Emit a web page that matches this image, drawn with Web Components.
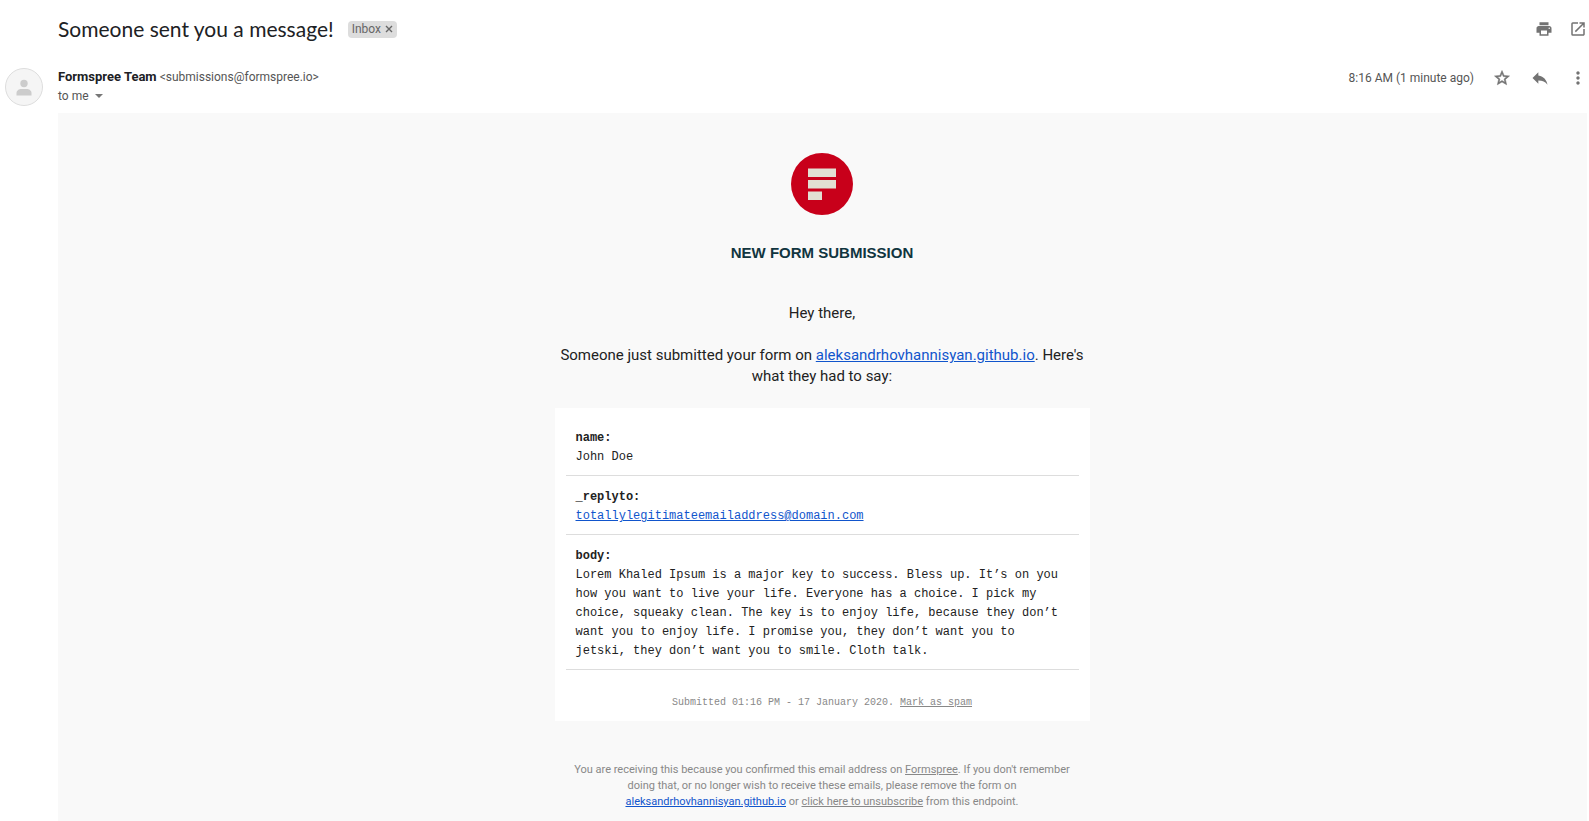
<!DOCTYPE html>
<html lang="en">
<head>
<meta charset="utf-8">
<title>Someone sent you a message!</title>
<style>
  body { margin: 0; background: #fff; color: #222; font-family: Roboto, sans-serif; }
</style>
</head>
<body>
<mail-view></mail-view>
<script>
const define = (name, html) => {
  const template = document.createElement('template');
  template.innerHTML = html;
  customElements.define(name, class extends HTMLElement {
    constructor() {
      super();
      this.attachShadow({ mode: 'open' }).append(template.content.cloneNode(true));
    }
  });
};

const icons = {
  print: [18, 'M19 8H5c-1.66 0-3 1.34-3 3v6h4v4h12v-4h4v-6c0-1.66-1.34-3-3-3zm-3 11H8v-5h8v5zm3-7c-.55 0-1-.45-1-1s.45-1 1-1 1 .45 1 1-.45 1-1 1zm-1-9H6v4h12V3z'],
  open: [18, 'M19 19H5V5h7V3H5a2 2 0 0 0-2 2v14a2 2 0 0 0 2 2h14c1.100 0 2-.9 2-2v-7h-2v7zM14 3v2h3.590l-9.830 9.830 1.410 1.410L19 6.410V10h2V3h-7z'],
  star: [18, 'M22 9.240l-7.190-.62L12 2 9.190 8.630 2 9.240l5.460 4.730L5.820 21 12 17.270 18.180 21l-1.630-7.030L22 9.240zM12 15.400l-3.760 2.270 1-4.280-3.320-2.880 4.380-.38L12 6.100l1.710 4.040 4.380.38-3.320 2.880 1 4.280L12 15.400z'],
  reply: [20, 'M10 9V5l-7 7 7 7v-4.100c5 0 8.500 1.600 11 5.100-1-5-4-10-11-11z'],
  more: [20, 'M12 8c1.100 0 2-.9 2-2s-.9-2-2-2-2 .9-2 2 .9 2 2 2zm0 2c-1.100 0-2 .9-2 2s.9 2 2 2 2-.9 2-2-.9-2-2-2zm0 6c-1.100 0-2 .9-2 2s.9 2 2 2 2-.9 2-2-.9-2-2-2z']
};

customElements.define('icon-button', class extends HTMLElement {
  connectedCallback() {
    if (this.shadowRoot) return;
    const [size, path] = icons[this.getAttribute('icon')];
    const edge = this.getAttribute('icon') === 'star' ? ' stroke="#737373" stroke-width="0.700"' : '';
    this.attachShadow({ mode: 'open' }).innerHTML = `
      <style>
        :host { display: block; flex: none; }
        button { display: grid; place-items: center; width: 20px; height: 20px; padding: 0; border: 0; background: none; cursor: pointer; }
        svg { display: block; fill: #737373; }
      </style>
      <button type="button" aria-label="${this.getAttribute('label')}"><svg width="${size}" height="${size}" viewBox="0 0 24 24"><path d="${path}"${edge}/></svg></button>`;
  }
});

define('label-chip', `
  <style>
    :host { display: flex; align-items: center; gap: 4px; height: 17px; padding: 0 4px; border-radius: 4px; background: #ddd; color: #666; font-size: 12px; line-height: 16px; }
    button { display: block; padding: 0; border: 0; background: none; cursor: pointer; }
    svg { display: block; }
  </style>
  <slot></slot>
  <button type="button" aria-label="Remove label"><svg width="8" height="8" viewBox="0 0 8 8"><path d="M1 1l6 6M7 1L1 7" stroke="#666" stroke-width="1.400"/></svg></button>`);

define('subject-bar', `
  <style>
    :host { display: flex; align-items: center; height: 58px; padding: 0 1px 0 58px; }
    h1 { margin: 0; font: 400 21px/28px Lato, sans-serif; color: #202124; }
    label-chip { margin-left: 14px; }
    .tools { display: flex; gap: 14px; margin-left: auto; }
  </style>
  <h1><slot></slot></h1>
  <label-chip>Inbox</label-chip>
  <div class="tools">
    <icon-button icon="print" label="Print all"></icon-button>
    <icon-button icon="open" label="In new window"></icon-button>
  </div>`);

define('sender-bar', `
  <style>
    :host { display: flex; align-items: flex-start; height: 45px; padding: 10px 1px 0 5px; color: #555; font-size: 12px; line-height: 18px; }
    .avatar { flex: none; width: 38px; height: 38px; margin-right: 15px; }
    .name { color: #202124; font-size: 13px; font-weight: 700; }
    .who button { display: flex; align-items: center; gap: 6px; padding: 0; border: 0; background: none; color: inherit; font: inherit; line-height: 20px; cursor: pointer; }
    .tools { display: flex; align-items: center; gap: 18px; margin-left: auto; }
  </style>
  <svg class="avatar" viewBox="0 0 38 38" role="img" aria-label="Sender">
    <circle cx="19" cy="19" r="18.500" fill="#f5f5f5" stroke="#ddd"/>
    <circle cx="19" cy="15.500" r="3.700" fill="#ccc"/>
    <path d="M11.500 27.500v-2.500c0-2.500 2.500-4 5-4h5c2.500 0 5 1.500 5 4v2.500z" fill="#ccc"/>
  </svg>
  <div class="who">
    <div><span class="name">Formspree Team</span> <span>&lt;submissions@formspree.io&gt;</span></div>
    <button type="button">to me <svg width="8" height="4" viewBox="0 0 8 4"><path d="M0 0h8L4 4z" fill="#777"/></svg></button>
  </div>
  <div class="tools">
    <time>8:16 AM (1 minute ago)</time>
    <icon-button icon="star" label="Star"></icon-button>
    <icon-button icon="reply" label="Reply"></icon-button>
    <icon-button icon="more" label="More"></icon-button>
  </div>`);

define('form-field', `
  <style>
    :host { display: block; padding: 12px 10px 8px; border-bottom: 1px solid #ddd; }
    dl, dd { margin: 0; }
    dt { font-weight: 700; }
    ::slotted(a) { color: #15c; }
  </style>
  <dl><dt><slot name="key"></slot></dt><dd><slot></slot></dd></dl>`);

define('submission-card', `
  <style>
    :host { display: block; padding: 9px 11px 8px; background: #fff; font: 12px/19px "Liberation Mono", monospace; color: #222; }
    p { margin: 23px 0 0; text-align: center; font-size: 10px; line-height: 20px; color: #888; }
    p a { color: inherit; }
  </style>
  <form-field><span slot="key">name:</span>John Doe</form-field>
  <form-field><span slot="key">_replyto:</span><a href="mailto:totallylegitimateemailaddress@domain.com">totallylegitimateemailaddress@domain.com</a></form-field>
  <form-field><span slot="key">body:</span>Lorem Khaled Ipsum is a major key to success. Bless up. It’s on you how you want to live your life. Everyone has a choice. I pick my choice, squeaky clean. The key is to enjoy life, because they don’t want you to enjoy life. I promise you, they don’t want you to jetski, they don’t want you to smile. Cloth talk.</form-field>
  <p>Submitted 01:16 PM - 17 January 2020. <a href="#spam">Mark as spam</a></p>`);

define('mail-body', `
  <style>
    :host { display: flex; flex-direction: column; align-items: center; margin: 0 2px 0 58px; padding: 40px 1px 10px 0; background: #f9f9f9; text-align: center; }
    .logo { display: block; width: 62px; height: 62px; }
    h2 { margin: 28px 0 0; color: #11353f; font: 700 15px/20px "Liberation Sans", sans-serif; }
    .column { width: 100%; max-width: 535px; }
    .intro { margin: 40px 0 21px; font-size: 15px; line-height: 21px; }
    .intro p { margin: 0 0 21px; }
    a { color: #15c; }
    submission-card { text-align: left; }
    footer { margin-top: 41px; padding: 0 10px; font-size: 11px; line-height: 16px; color: #888; }
    footer .plain { color: inherit; }
  </style>
  <svg class="logo" viewBox="0 0 62 62" role="img" aria-label="Formspree">
    <circle cx="31" cy="31" r="31" fill="#c8001a"/>
    <path d="M17 15.500h28v8.500H17zM17 27h28v8.500H17zM17 38.500h14v8.500H17z" fill="#e2e0d3"/>
  </svg>
  <h2>NEW FORM SUBMISSION</h2>
  <div class="column">
    <div class="intro">
      <p>Hey there,</p>
      <p>Someone just submitted your form on <a href="https://aleksandrhovhannisyan.github.io">aleksandrhovhannisyan.github.io</a>. Here's what they had to say:</p>
    </div>
    <submission-card></submission-card>
    <footer>You are receiving this because you confirmed this email address on <a class="plain" href="https://formspree.io">Formspree</a>. If you don't remember doing that, or no longer wish to receive these emails, please remove the form on <a href="https://aleksandrhovhannisyan.github.io">aleksandrhovhannisyan.github.io</a> or <a class="plain" href="#unsubscribe">click here to unsubscribe</a> from this endpoint.</footer>
  </div>`);

define('mail-view', `
  <style>
    :host { display: flex; flex-direction: column; min-height: 100vh; }
    mail-body { flex: 1; }
  </style>
  <subject-bar>Someone sent you a message!</subject-bar>
  <sender-bar></sender-bar>
  <mail-body></mail-body>`);
</script>
</body>
</html>
